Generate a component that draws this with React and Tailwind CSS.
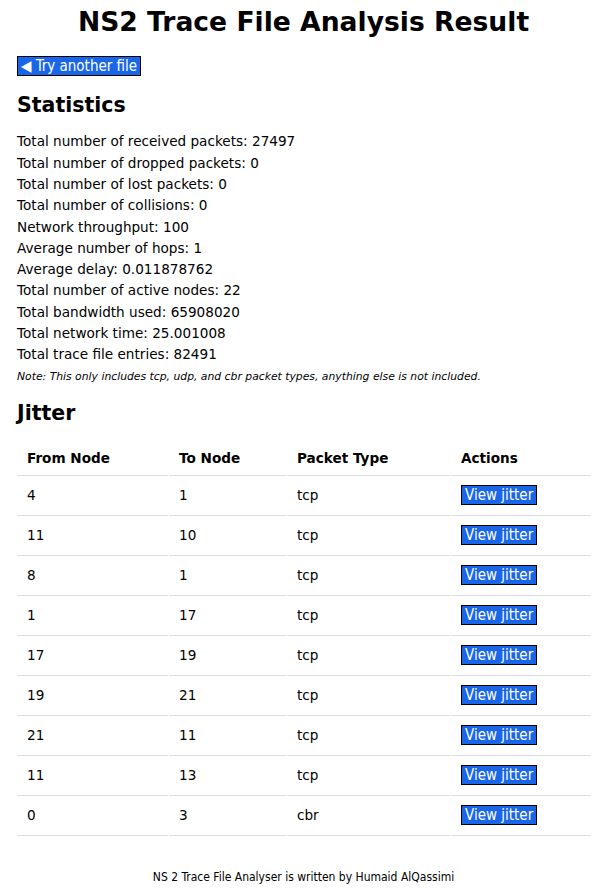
import React from 'react';

const stats = [
  ['Total number of received packets', '27497'],
  ['Total number of dropped packets', '0'],
  ['Total number of lost packets', '0'],
  ['Total number of collisions', '0'],
  ['Network throughput', '100'],
  ['Average number of hops', '1'],
  ['Average delay', '0.011878762'],
  ['Total number of active nodes', '22'],
  ['Total bandwidth used', '65908020'],
  ['Total network time', '25.001008'],
  ['Total trace file entries', '82491'],
];

const rows = [
  [4, 1, 'tcp'],
  [11, 10, 'tcp'],
  [8, 1, 'tcp'],
  [1, 17, 'tcp'],
  [17, 19, 'tcp'],
  [19, 21, 'tcp'],
  [21, 11, 'tcp'],
  [11, 13, 'tcp'],
  [0, 3, 'cbr'],
];

function BlueButton({ children }) {
  return (
    <button
      type="button"
      className="bg-[#1a66e8] text-white border border-black px-[3px] leading-[18px] text-[15px] font-['DejaVu_Sans_Condensed','DejaVu_Sans',sans-serif]"
    >
      {children}
    </button>
  );
}

export default function App() {
  return (
    <div className="bg-white text-black px-[17px] font-['DejaVu_Sans',sans-serif] text-[13.6px]">
      <h1 className="text-center font-bold text-[26.6px] leading-[34px] pt-[5px]">NS2 Trace File Analysis Result</h1>

      <div className="mt-[17px]">
        <BlueButton>◀ Try another file</BlueButton>
      </div>

      <h2 className="font-bold text-[20.5px] leading-[26px] mt-[16px]">Statistics</h2>

      <div className="mt-[13px] leading-[21.3px]">
        {stats.map(([label, value]) => (
          <div key={label}>{label}: {value}</div>
        ))}
      </div>
      <p className="italic text-[10.8px] leading-[16px] mt-[3px]">
        Note: This only includes tcp, udp, and cbr packet types, anything else is not included.
      </p>

      <h2 className="font-bold text-[20.5px] leading-[26px] mt-[15px]">Jitter</h2>

      <table className="table-fixed mt-[16px] border-separate border-spacing-x-[1px] border-spacing-y-0 -ml-[1px] w-[576px]">
        <thead>
          <tr className="text-left">
            <th className="w-[151px] h-[34px] px-[10px] font-bold border-b border-[#dddddd]">From Node</th>
            <th className="w-[117px] px-[10px] font-bold border-b border-[#dddddd]">To Node</th>
            <th className="w-[163px] px-[10px] font-bold border-b border-[#dddddd]">Packet Type</th>
            <th className="px-[10px] font-bold border-b border-[#dddddd]">Actions</th>
          </tr>
        </thead>
        <tbody>
          {rows.map((r, i) => (
            <tr key={i}>
              <td className="h-[40px] px-[10px] border-b border-[#dddddd]">{r[0]}</td>
              <td className="px-[10px] border-b border-[#dddddd]">{r[1]}</td>
              <td className="px-[10px] border-b border-[#dddddd]">{r[2]}</td>
              <td className="px-[10px] border-b border-[#dddddd]">
                <BlueButton>View jitter</BlueButton>
              </td>
            </tr>
          ))}
        </tbody>
      </table>

      <footer className="text-center text-[12px] leading-[14px] mt-[34px] pb-[5px] font-['DejaVu_Sans_Condensed','DejaVu_Sans',sans-serif]">
        NS 2 Trace File Analyser is written by Humaid AlQassimi
      </footer>
    </div>
  );
}
